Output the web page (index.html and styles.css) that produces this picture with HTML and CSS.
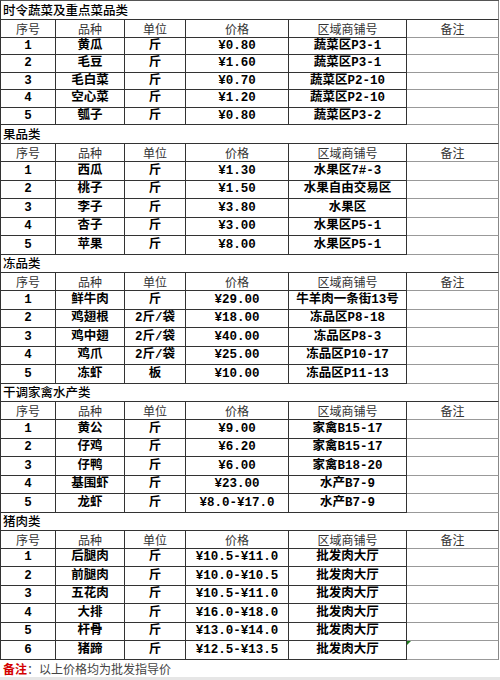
FILE: index.html
```html
<!DOCTYPE html>
<html lang="zh-CN">
<head>
<meta charset="utf-8">
<title>价格表</title>
<link rel="stylesheet" href="styles.css">
</head>
<body>
<div class="sheet">
  <section class="sec s1">
    <div class="title">时令蔬菜及重点菜品类</div>
    <div class="row head"><div>序号</div><div>品种</div><div>单位</div><div>价格</div><div>区域商铺号</div><div class="rm">备注</div></div>
    <div class="row d r17"><div>1</div><div>黄瓜</div><div>斤</div><div>¥0.80</div><div>蔬菜区P3-1</div><div class="rm"></div></div>
    <div class="row d r18"><div>2</div><div>毛豆</div><div>斤</div><div>¥1.60</div><div>蔬菜区P3-1</div><div class="rm"></div></div>
    <div class="row d r17"><div>3</div><div>毛白菜</div><div>斤</div><div>¥0.70</div><div>蔬菜区P2-10</div><div class="rm"></div></div>
    <div class="row d r18"><div>4</div><div>空心菜</div><div>斤</div><div>¥1.20</div><div>蔬菜区P2-10</div><div class="rm"></div></div>
    <div class="row d r17"><div>5</div><div>瓠子</div><div>斤</div><div>¥0.80</div><div>蔬菜区P3-2</div><div class="rm"></div></div>
  </section>
  <section class="sec s2">
    <div class="title">果品类</div>
    <div class="row head"><div>序号</div><div>品种</div><div>单位</div><div>价格</div><div>区域商铺号</div><div class="rm">备注</div></div>
    <div class="row d r19"><div>1</div><div>西瓜</div><div>斤</div><div>¥1.30</div><div>水果区7#-3</div><div class="rm"></div></div>
    <div class="row d r18"><div>2</div><div>桃子</div><div>斤</div><div>¥1.50</div><div>水果自由交易区</div><div class="rm"></div></div>
    <div class="row d r19"><div>3</div><div>李子</div><div>斤</div><div>¥3.80</div><div>水果区</div><div class="rm"></div></div>
    <div class="row d r18"><div>4</div><div>杏子</div><div>斤</div><div>¥3.00</div><div>水果区P5-1</div><div class="rm"></div></div>
    <div class="row d r19"><div>5</div><div>苹果</div><div>斤</div><div>¥8.00</div><div>水果区P5-1</div><div class="rm"></div></div>
  </section>
  <section class="sec s3">
    <div class="title">冻品类</div>
    <div class="row head"><div>序号</div><div>品种</div><div>单位</div><div>价格</div><div>区域商铺号</div><div class="rm">备注</div></div>
    <div class="row d r19"><div>1</div><div>鲜牛肉</div><div>斤</div><div>¥29.00</div><div>牛羊肉一条街13号</div><div class="rm"></div></div>
    <div class="row d r18"><div>2</div><div>鸡翅根</div><div>2斤/袋</div><div>¥18.00</div><div>冻品区P8-18</div><div class="rm"></div></div>
    <div class="row d r19"><div>3</div><div>鸡中翅</div><div>2斤/袋</div><div>¥40.00</div><div>冻品区P8-3</div><div class="rm"></div></div>
    <div class="row d r18"><div>4</div><div>鸡爪</div><div>2斤/袋</div><div>¥25.00</div><div>冻品区P10-17</div><div class="rm"></div></div>
    <div class="row d r19"><div>5</div><div>冻虾</div><div>板</div><div>¥10.00</div><div>冻品区P11-13</div><div class="rm"></div></div>
  </section>
  <section class="sec s3">
    <div class="title">干调家禽水产类</div>
    <div class="row head"><div>序号</div><div>品种</div><div>单位</div><div>价格</div><div>区域商铺号</div><div class="rm">备注</div></div>
    <div class="row d r19"><div>1</div><div>黄公</div><div>斤</div><div>¥9.00</div><div>家禽B15-17</div><div class="rm"></div></div>
    <div class="row d r18"><div>2</div><div>仔鸡</div><div>斤</div><div>¥6.20</div><div>家禽B15-17</div><div class="rm"></div></div>
    <div class="row d r19"><div>3</div><div>仔鸭</div><div>斤</div><div>¥6.00</div><div>家禽B18-20</div><div class="rm"></div></div>
    <div class="row d r18"><div>4</div><div>基围虾</div><div>斤</div><div>¥23.00</div><div>水产B7-9</div><div class="rm"></div></div>
    <div class="row d r19"><div>5</div><div>龙虾</div><div>斤</div><div>¥8.0-¥17.0</div><div>水产B7-9</div><div class="rm"></div></div>
  </section>
  <section class="sec s3">
    <div class="title">猪肉类</div>
    <div class="row head"><div>序号</div><div>品种</div><div>单位</div><div>价格</div><div>区域商铺号</div><div class="rm">备注</div></div>
    <div class="row d r18"><div>1</div><div>后腿肉</div><div>斤</div><div>¥10.5-¥11.0</div><div>批发肉大厅</div><div class="rm"></div></div>
    <div class="row d r19"><div>2</div><div>前腿肉</div><div>斤</div><div>¥10.0-¥10.5</div><div>批发肉大厅</div><div class="rm"></div></div>
    <div class="row d r18"><div>3</div><div>五花肉</div><div>斤</div><div>¥10.5-¥11.0</div><div>批发肉大厅</div><div class="rm"></div></div>
    <div class="row d r19"><div>4</div><div>大排</div><div>斤</div><div>¥16.0-¥18.0</div><div>批发肉大厅</div><div class="rm"></div></div>
    <div class="row d r18"><div>5</div><div>杆骨</div><div>斤</div><div>¥13.0-¥14.0</div><div>批发肉大厅</div><div class="rm"></div></div>
    <div class="row d r19"><div>6</div><div>猪蹄</div><div>斤</div><div>¥12.5-¥13.5</div><div>批发肉大厅</div><div class="rm"><span class="mark"></span></div></div>
  </section>
</div>
<div class="footer"><span class="note">备注</span>：以上价格均为批发指导价</div>
</body>
</html>
```

FILE: styles.css
```css
html, body {
  margin: 0;
  padding: 0;
  background: #ffffff;
}

body {
  width: 500px;
  height: 680px;
  overflow: hidden;
  font-family: "Noto Sans CJK SC", sans-serif;
  color: #000;
}

.sheet {
  width: 499px;
  border-left: 1px solid #333;
  border-top: 1px solid #555;
  box-sizing: border-box;
}

.title {
  height: 18px;
  box-sizing: border-box;
  border-right: 1px solid #888;
  border-bottom: 1px solid #333;
  padding-left: 2px;
  display: flex;
  align-items: center;
  font-size: 12.5px;
  font-weight: 500;
  line-height: 1;
  color: #000;
}

.s1 .title { height: 19px; }
.s2 .title { height: 19px; }

.row {
  display: grid;
  grid-template-columns: 55px 69px 61px 103px 118px 92px;
}

.row > div {
  box-sizing: border-box;
  border-right: 1px solid #333;
  border-bottom: 1px solid #333;
  display: flex;
  align-items: center;
  justify-content: center;
  white-space: nowrap;
  line-height: 1;
  position: relative;
}

.row > div.rm {
  border-right-color: #888;
  border-bottom-color: #999;
}

.head {
  height: 18px;
}

.head > div {
  font-size: 12px;
  color: #333;
  font-weight: 400;
}

.d > div {
  font-family: "Liberation Mono", "Noto Sans CJK SC", monospace;
  font-size: 12.5px;
  font-weight: 700;
  color: #000;
}

.r17 { height: 17px; }
.r18 { height: 18px; }
.r19 { height: 19px; }

.mark {
  position: absolute;
  left: 0;
  top: 0;
  width: 0;
  height: 0;
  border-top: 4px solid #1e7a1e;
  border-right: 4px solid transparent;
}

.footer {
  height: 20px;
  box-sizing: border-box;
  padding-left: 3px;
  display: flex;
  align-items: center;
  font-size: 12px;
  line-height: 1;
  color: #444;
  border-bottom: 3px solid #e6e6e6;
}

.note {
  color: #d40000;
  font-weight: 700;
}
```
